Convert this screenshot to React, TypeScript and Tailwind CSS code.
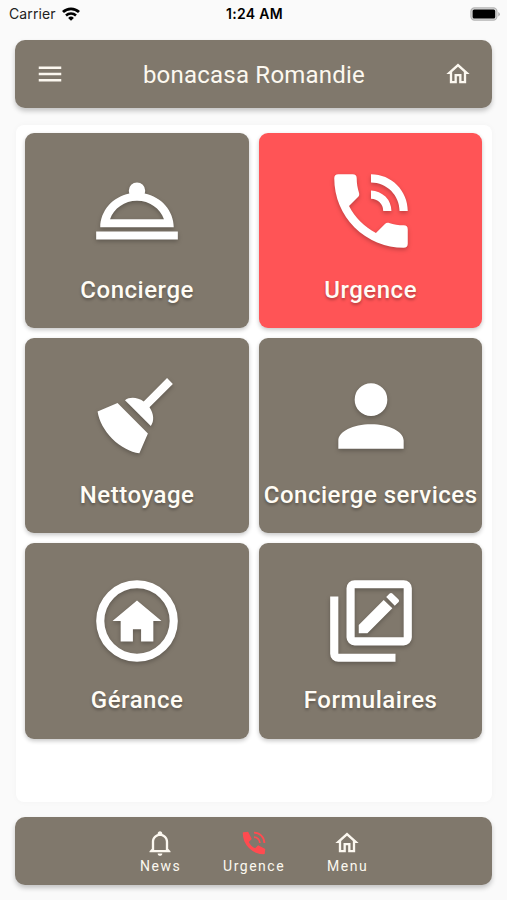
import React, { useState } from 'react';
import clsx from 'clsx';

const icons = {
  menu: 'M3,6H21V8H3V6M3,11H21V13H3V11M3,16H21V18H3V16Z',
  home: 'M12 5.69L17 10.19V18H15V12H9V18H7V10.19L12 5.69M12 3L2 12H5V20H11V14H13V20H19V12H22L12 3Z',
  bell: 'M10 21H14C14 22.1 13.1 23 12 23S10 22.1 10 21M21 19V20H3V19L5 17V11C5 7.9 7 5.2 10 4.3V4C10 2.9 10.9 2 12 2S14 2.9 14 4V4.3C17 5.2 19 7.9 19 11V17L21 19M17 11C17 8.2 14.8 6 12 6S7 8.2 7 11V18H17V11Z',
  phone:
    'M15,12H17A5,5 0 0,0 12,7V9A3,3 0 0,1 15,12M19,12H21C21,7 16.97,3 12,3V5C15.86,5 19,8.13 19,12M20,15.5C18.75,15.5 17.55,15.3 16.43,14.93C16.08,14.82 15.69,14.9 15.41,15.18L13.21,17.38C10.38,15.94 8.06,13.62 6.62,10.79L8.82,8.59C9.1,8.31 9.18,7.92 9.07,7.57C8.7,6.45 8.5,5.25 8.5,4A1,1 0 0,0 7.5,3H4A1,1 0 0,0 3,4A17,17 0 0,0 20,21A1,1 0 0,0 21,20V16.5A1,1 0 0,0 20,15.5Z',
  phoneTab:
    'M16,12H17.4A5.4,5.4 0 0,0 12,6.6V8A4,4 0 0,1 16,12M19.6,12H21A9,9 0 0,0 12,3V4.4A7.6,7.6 0 0,1 19.6,12M3.6,3.4L7.3,3L10.2,8.7L7.8,11.1C8.9,13.3 10.7,15.1 12.9,16.2L15.3,13.8L21,16.7L20.6,20.4C20.5,20.8 20.3,21 20,21A17,17 0 0,1 3,4C3,3.7 3.2,3.5 3.6,3.4Z',
  concierge:
    'M12,5A2,2 0 0,0 10,7C10,7.24 10.04,7.47 10.12,7.69C6.03,8.53 3,11.93 3,16H21C21,11.93 17.97,8.53 13.88,7.69C13.96,7.47 14,7.24 14,7A2,2 0 0,0 12,5M12,9.5C15.05,9.5 17.66,11.37 18.6,14H5.4C6.34,11.37 8.95,9.5 12,9.5M2,17V19H22V17H2Z',
  broom:
    'M19.36,2.72L20.78,4.14L15.06,9.85C16.13,11.39 16.28,13.24 15.38,14.44L9.06,8.12C10.26,7.22 12.11,7.37 13.65,8.44L19.36,2.72M5.93,17.57C3.92,15.56 2.69,13.16 2.35,10.92L7.23,8.83L14.67,16.27L12.58,21.15C10.34,20.81 7.94,19.58 5.93,17.57Z',
  account:
    'M12,4A4,4 0 0,1 16,8A4,4 0 0,1 12,12A4,4 0 0,1 8,8A4,4 0 0,1 12,4M12,14C16.42,14 20,15.79 20,18V20H4V18C4,15.79 7.58,14 12,14Z',
  homeCircle:
    'M12,2A10,10 0 0,1 22,12A10,10 0 0,1 12,22A10,10 0 0,1 2,12A10,10 0 0,1 12,2M12,4A8,8 0 0,0 4,12A8,8 0 0,0 12,20A8,8 0 0,0 20,12A8,8 0 0,0 12,4M12,7L18,12H16V17H13V14H11V17H8V12H6L12,7Z',
  forms:
    'M20,2H8A2,2 0 0,0 6,4V16A2,2 0 0,0 8,18H20A2,2 0 0,0 22,16V4A2,2 0 0,0 20,2M20,16H8V4H20V16M4,6H2V20A2,2 0 0,0 4,22H18V20H4V6M15.1,6.88L9,13V15H11.12L17.22,8.88L15.1,6.88M18.7,6.7L17.3,5.3C17.08,5.08 16.72,5.08 16.5,5.3L15.72,6.12L17.82,8.25L18.7,7.42C18.95,7.2 18.92,6.92 18.7,6.7Z',
};

type IconName = keyof typeof icons;

function Icon({ name, className }: { name: IconName; className?: string }) {
  return (
    <svg viewBox="0 0 24 24" fill="currentColor" fillRule="evenodd" className={clsx('shrink-0', className)}>
      <path d={icons[name]} />
    </svg>
  );
}

const tiles: { icon: IconName; label: string; urgent?: boolean }[] = [
  { icon: 'concierge', label: 'Concierge' },
  { icon: 'phone', label: 'Urgence', urgent: true },
  { icon: 'broom', label: 'Nettoyage' },
  { icon: 'account', label: 'Concierge services' },
  { icon: 'homeCircle', label: 'Gérance' },
  { icon: 'forms', label: 'Formulaires' },
];

const tabs: { icon: IconName; label: string; width: string }[] = [
  { icon: 'bell', label: 'News', width: 'w-[93px]' },
  { icon: 'phoneTab', label: 'Urgence', width: 'w-[94px]' },
  { icon: 'home', label: 'Menu', width: 'w-[93px]' },
];

function StatusBar() {
  return (
    <div className="grid h-7 grid-cols-3 items-center pr-[7px] pl-[9px] font-['Inter',sans-serif] text-[14px] leading-none text-black">
      <div className="flex items-center gap-1.5">
        <span className="tracking-[0.1px] text-[#222]">Carrier</span>
        <svg viewBox="0 0 18 14" className="h-3.5 w-[18px]" fill="none" stroke="#000" strokeWidth="2.8">
          <path d="M1 5.1a11.5 11.5 0 0 1 16 0" />
          <path d="M4 8.5a7.2 7.2 0 0 1 10 0" strokeWidth="2.5" />
          <path d="M9 13.7L6.1 10.9a4.2 4.2 0 0 1 5.8 0z" fill="#000" stroke="none" />
        </svg>
      </div>
      <span className="text-center font-semibold tracking-[0.3px]">1:24 AM</span>
      <svg viewBox="0 0 30 14" className="h-3.5 w-[30px] justify-self-end">
        <rect x="0.9" y="0.9" width="26" height="12.2" rx="3.6" fill="#ddd" stroke="#b4b4b4" strokeWidth="1.2" />
        <rect x="2.6" y="2.5" width="22.6" height="9" rx="1.6" fill="#000" />
        <path d="M28.3 5v4.4q1.5-.8 1.5-2.2T28.3 5z" fill="#aaa" />
      </svg>
    </div>
  );
}

export default function App() {
  const [activeTab, setActiveTab] = useState('Urgence');

  return (
    <div className="flex h-[900px] w-[507px] flex-col overflow-hidden bg-[#fafafa] font-['Roboto',sans-serif]">
      <StatusBar />

      {/* Header */}
      <header className="mr-[15px] ml-[15.4px] mt-3 flex h-[68px] shrink-0 items-center justify-between rounded-[10px] bg-[#80786c] pr-5 pl-[19.6px] text-[#fcf8f0] shadow-[0_3px_5px_rgba(0,0,0,0.22)]">
        <button className="cursor-pointer">
          <Icon name="menu" className="h-[30px] w-[30px]" />
        </button>
        <h1 className="pt-px pr-px text-[24px] leading-none tracking-[0.22px]">bonacasa Romandie</h1>
        <button className="cursor-pointer">
          <Icon name="home" className="h-7 w-7" />
        </button>
      </header>

      {/* Services */}
      <main className="mr-[15px] ml-4 mt-[17px] h-[677px] shrink-0 rounded-[8px] bg-white pr-[9.6px] pl-[9.4px] pt-2 shadow-[0_0_6px_rgba(0,0,0,0.03)]">
        <div className="grid grid-cols-2 gap-2.5">
          {tiles.map(({ icon, label, urgent }) => (
            <button
              key={label}
              className={clsx(
                'flex h-[195.2px] cursor-pointer flex-col items-center rounded-[9px] pt-[29px] text-white shadow-[0_2px_4px_rgba(0,0,0,0.22)]',
                urgent ? 'bg-[#ff5456]' : 'bg-[#80786c]'
              )}
            >
              <Icon name={icon} className="h-[98px] w-[98px] drop-shadow-[0_2px_2px_rgba(0,0,0,0.25)]" />
              <span className="mt-[15.6px] text-[24px] leading-7 font-medium tracking-[0.52px] whitespace-nowrap text-[#fffcf5] [text-shadow:0_2px_3px_rgba(0,0,0,0.3)]">
                {label}
              </span>
            </button>
          ))}
        </div>
      </main>

      {/* Bottom navigation */}
      <nav className="mr-[15px] ml-[15.4px] mt-[15px] flex h-[68px] shrink-0 justify-center rounded-[10px] bg-[#80786c] pt-[11px] text-[#fcf8f0] shadow-[0_3px_5px_rgba(0,0,0,0.22)]">
        {tabs.map(({ icon, label, width }) => (
          <button
            key={label}
            onClick={() => setActiveTab(label)}
            className={clsx('flex cursor-pointer flex-col items-center', width)}
          >
            <span className="flex h-[29px] items-center">
              <Icon
                name={icon}
                className={clsx(icon === 'phoneTab' ? 'h-[30px] w-[30px]' : 'h-7 w-7', activeTab === label && 'text-[#ff4b50]')}
              />
            </span>
            <span className="mt-px pl-[0.8px] text-[14px] leading-4 tracking-[1.5px]">{label}</span>
          </button>
        ))}
      </nav>
    </div>
  );
}
